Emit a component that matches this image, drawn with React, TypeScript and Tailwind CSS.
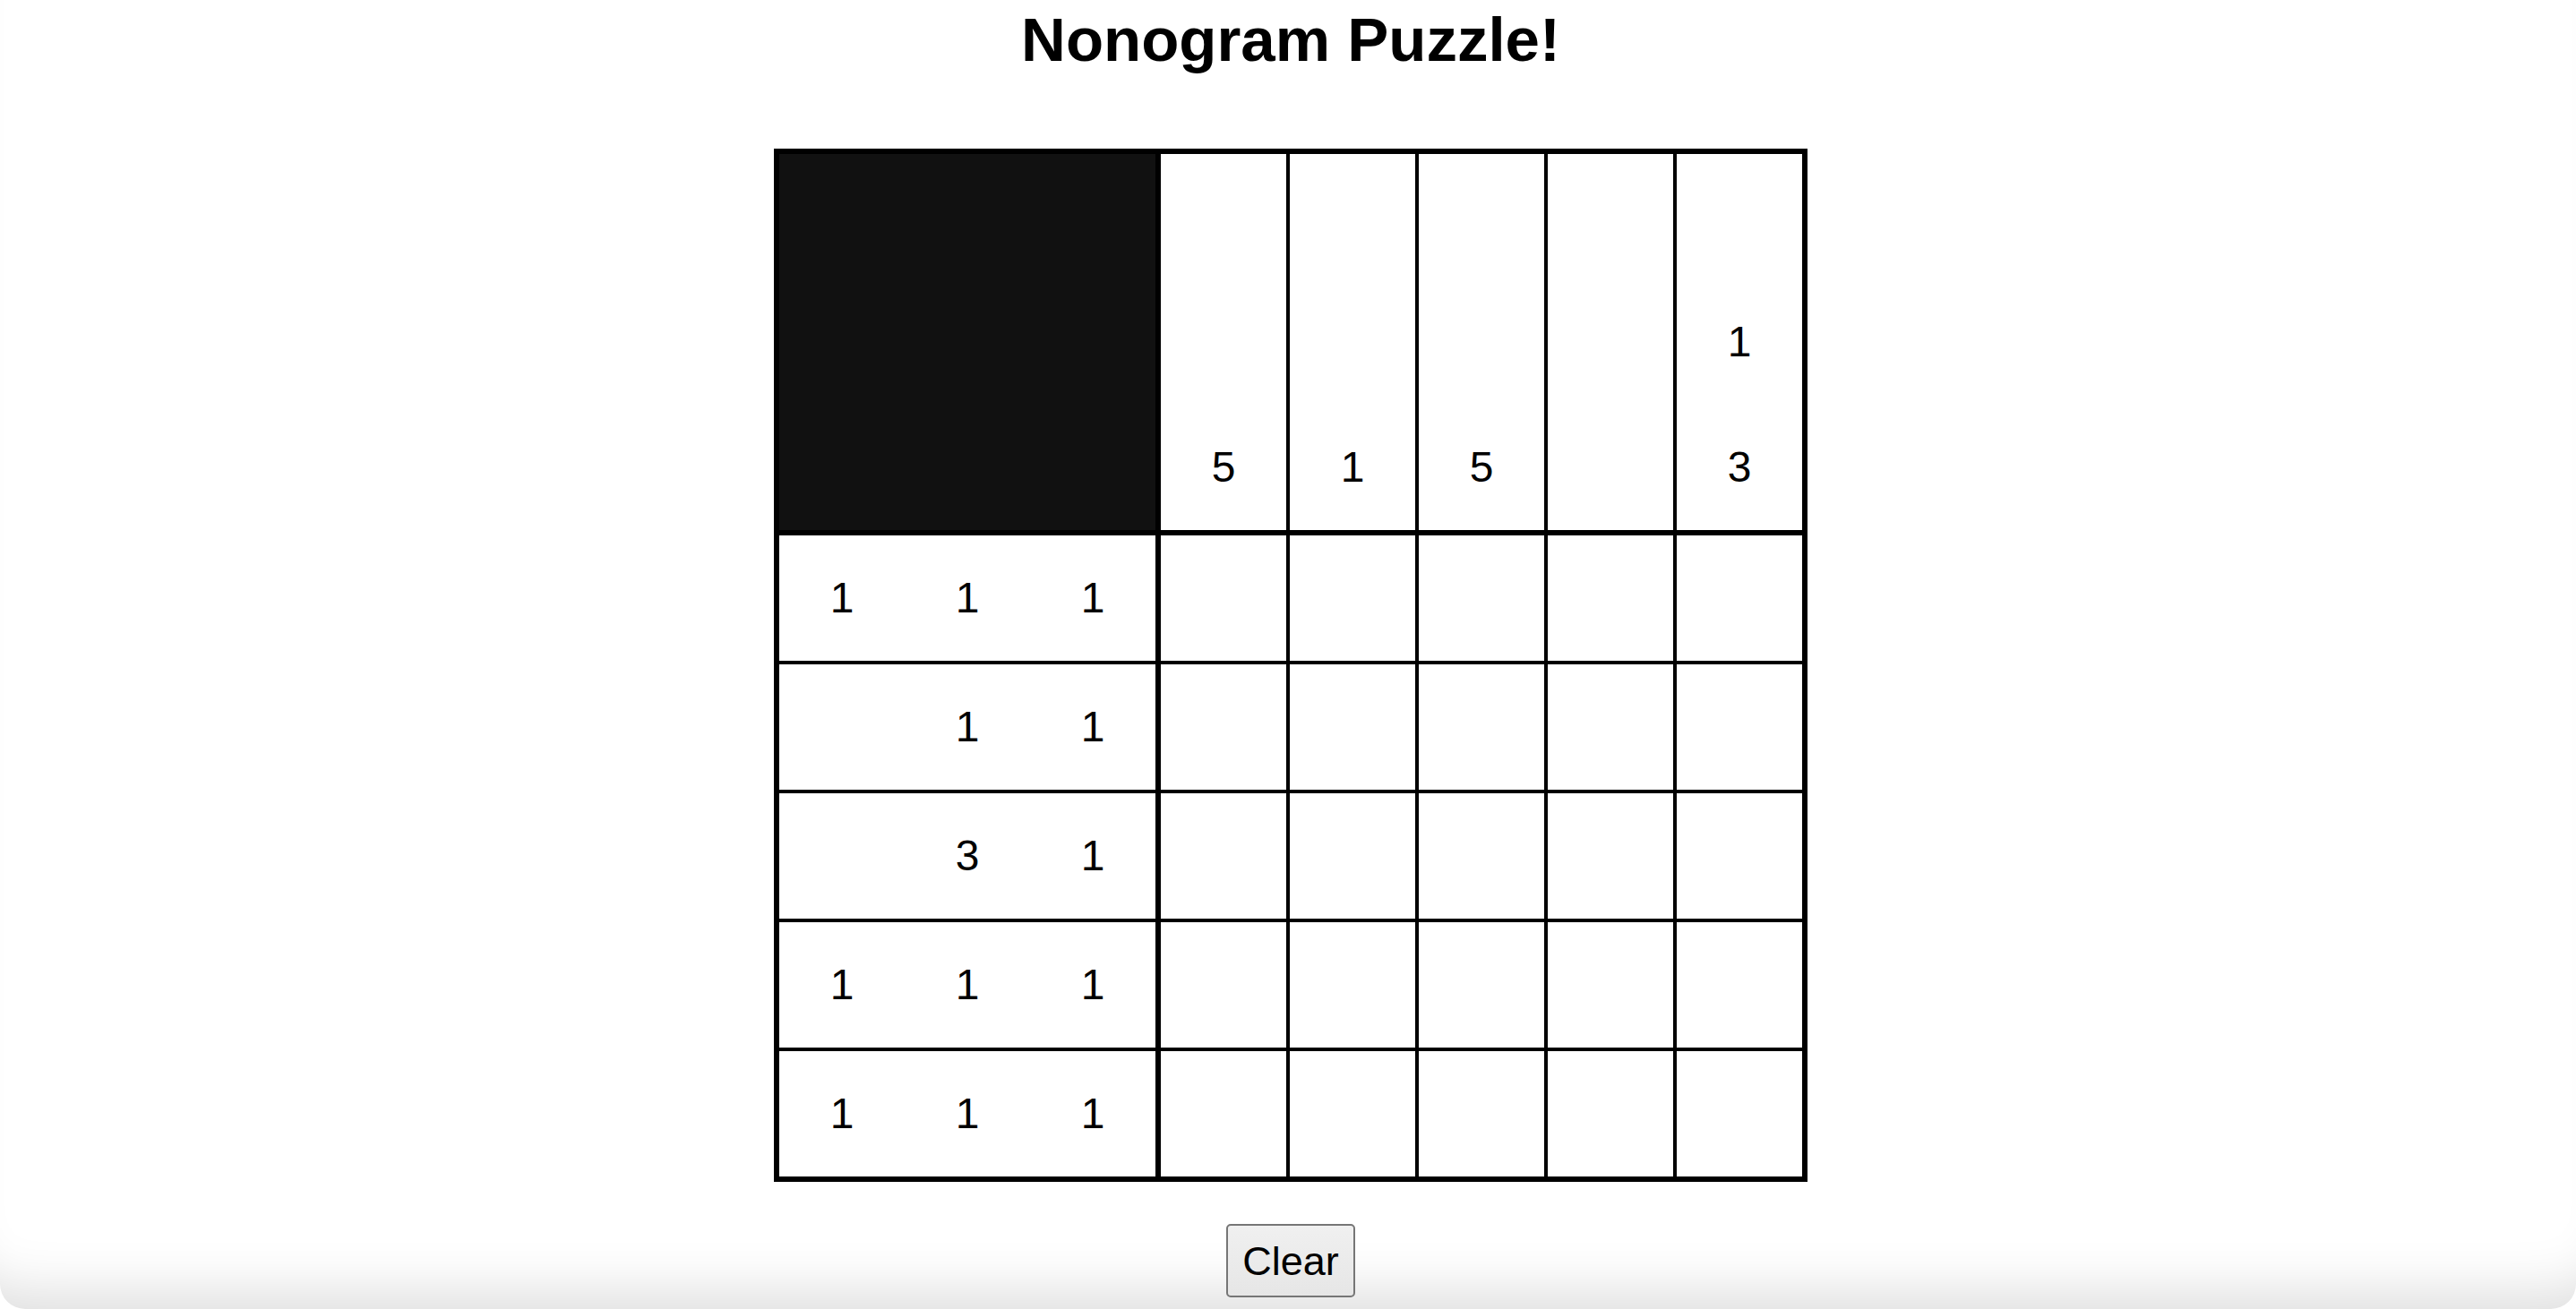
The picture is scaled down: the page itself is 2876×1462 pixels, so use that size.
import { useState } from "react";

const colClues: number[][] = [[5], [1], [5], [], [1, 3]];
const rowClues: number[][] = [[1, 1, 1], [1, 1], [3, 1], [1, 1, 1], [1, 1, 1]];

// pad clue lists to 3 slots, numbers pushed to the end
const pad = (clue: number[]) => {
  const out: (number | null)[] = [null, null, null];
  clue.forEach((n, i) => {
    out[3 - clue.length + i] = n;
  });
  return out;
};

const App = () => {
  const [cells, setCells] = useState<boolean[]>(Array(25).fill(false));

  const toggle = (i: number) => {
    const next = [...cells];
    next[i] = !next[i];
    setCells(next);
  };

  return (
    <div className="h-screen w-full flex flex-col items-center bg-white rounded-b-[28px] shadow-[inset_0_-70px_60px_-50px_rgba(0,0,0,0.13)] font-['Liberation_Sans',Arial,sans-serif] text-black">
      <h1 className="mt-[5px] ml-[6px] text-[69px] leading-[80px] font-bold">Nonogram Puzzle!</h1>

      <div className="mt-[81px] ml-[6px] border-[6px] border-black bg-black grid grid-cols-[422px_repeat(5,140px)] grid-rows-[422px_repeat(5,140px)] gap-[4px]">
        <div className="bg-[#111111] border-r-2 border-b-2 border-black"></div>

        {colClues.map((clue, c) => (
          <div key={`c${c}`} className="bg-white border-b-2 border-black flex flex-col">
            {pad(clue).map((n, k) => (
              <div key={k} className="h-[140px] flex items-center justify-center text-[48px]">
                {n}
              </div>
            ))}
          </div>
        ))}

        {rowClues.map((clue, r) => (
          <>
            <div key={`r${r}`} className="bg-white border-r-2 border-black flex">
              {pad(clue).map((n, k) => (
                <div key={k} className="w-[140px] flex items-center justify-center text-[48px]">
                  {n}
                </div>
              ))}
            </div>
            {[0, 1, 2, 3, 4].map((c) => (
              <div
                key={`${r}-${c}`}
                onClick={() => toggle(r * 5 + c)}
                className={`cursor-pointer ${cells[r * 5 + c] ? 'bg-[#111111]' : 'bg-white'}`}
              ></div>
            ))}
          </>
        ))}
      </div>

      <button
        onClick={() => setCells(Array(25).fill(false))}
        className="mt-[47px] ml-[6px] w-[144px] h-[82px] border-2 border-[#767676] rounded-[5px] bg-gradient-to-b from-[#f0f0f0] to-[#e6e6e6] text-[45px] leading-none text-black"
      >
        Clear
      </button>
    </div>
  );
};

export default App;
